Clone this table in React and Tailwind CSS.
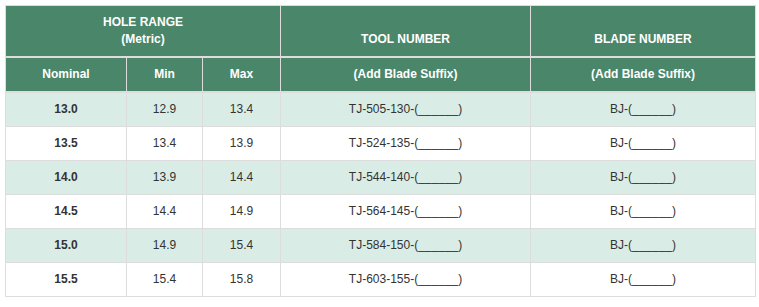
const rows = [
  { nominal: '13.0', min: '12.9', max: '13.4', tool: 'TJ-505-130-' },
  { nominal: '13.5', min: '13.4', max: '13.9', tool: 'TJ-524-135-' },
  { nominal: '14.0', min: '13.9', max: '14.4', tool: 'TJ-544-140-' },
  { nominal: '14.5', min: '14.4', max: '14.9', tool: 'TJ-564-145-' },
  { nominal: '15.0', min: '14.9', max: '15.4', tool: 'TJ-584-150-' },
  { nominal: '15.5', min: '15.4', max: '15.8', tool: 'TJ-603-155-' },
];

const th = 'border border-[#ddd] border-b-2 px-2 py-2 align-bottom text-center font-bold text-white';
const td = 'border border-[#ddd] px-2 py-2 text-center align-middle';

export default function App() {
  return (
    <div className="bg-white p-[5px] font-['Liberation_Sans',Arial,sans-serif] text-[12px] leading-[17px] text-[#333]">
      <table className="w-[750px] table-fixed border-collapse">
        <colgroup>
          <col className="w-[121px]" />
          <col className="w-[76px]" />
          <col className="w-[78px]" />
          <col className="w-[250px]" />
          <col className="w-[225px]" />
        </colgroup>
        <thead className="bg-[#4a8669]">
          <tr>
            <th colSpan={3} className={th}>
              HOLE RANGE
              <br />
              (Metric)
            </th>
            <th className={th}>TOOL NUMBER</th>
            <th className={th}>BLADE NUMBER</th>
          </tr>
          <tr>
            <th className={th}>Nominal</th>
            <th className={th}>Min</th>
            <th className={th}>Max</th>
            <th className={th}>(Add Blade Suffix)</th>
            <th className={th}>(Add Blade Suffix)</th>
          </tr>
        </thead>
        <tbody>
          {rows.map((r, i) => (
            <tr key={r.nominal} className={i % 2 === 0 ? 'bg-[#d9ede6]' : 'bg-white'}>
              <td className={`${td} font-bold`}>{r.nominal}</td>
              <td className={td}>{r.min}</td>
              <td className={td}>{r.max}</td>
              <td className={td}>{r.tool}(______)</td>
              <td className={td}>BJ-(______)</td>
            </tr>
          ))}
        </tbody>
      </table>
    </div>
  );
}
